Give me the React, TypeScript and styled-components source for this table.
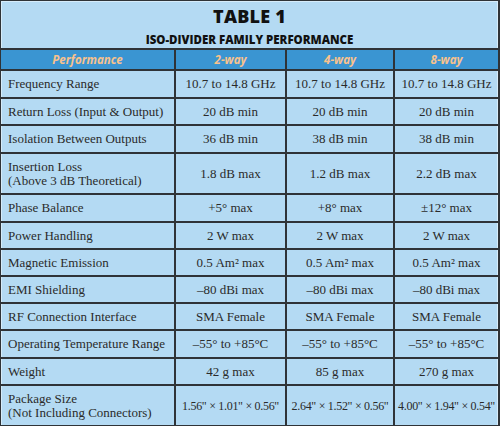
import React from 'react';
import styled, { createGlobalStyle } from 'styled-components';

const GlobalStyle = createGlobalStyle`
  body {
    margin: 0;
    background: #ffffff;
  }
`;

const Frame = styled.div`
  width: 500px;
  height: 426px;
  box-sizing: border-box;
  border: 1px solid #2f3337;
  border-right-width: 2px;
  background: #b4daf3;
  box-shadow: inset 1px 1px 0 #d6ecfa, inset -1px 0 0 #d6ecfa;
  overflow: hidden;
`;

const Heading = styled.div`
  height: 47px;
  display: flex;
  flex-direction: column;
  align-items: center;
  font-family: 'Open Sans', 'Liberation Sans', sans-serif;
  font-weight: 800;
  color: #111;
`;

const Title = styled.div`
  font-size: 18px;
  line-height: 18px;
  margin-top: 6px;
  letter-spacing: 0.2px;
`;

const Subtitle = styled.div`
  font-size: 11.5px;
  line-height: 12px;
  margin-top: 9px;
`;

const Table = styled.table`
  width: 100%;
  border-collapse: collapse;
  table-layout: fixed;
  font-family: 'Liberation Serif', 'DejaVu Serif', serif;
  font-size: 13px;
  color: #2a2a2a;
`;

const Row = styled.tr<{ $h: number }>`
  height: ${(p) => p.$h}px;
`;

const Head = styled.th`
  background: #3a95d2;
  color: #f9c28d;
  font-family: 'Open Sans', 'Liberation Sans', sans-serif;
  font-style: italic;
  font-weight: 700;
  font-size: 11.5px;
  text-align: center;
  border: 2px solid #2f3337;
  padding: 0;
  &:first-child { border-left: none; }
  &:last-child { border-right: none; }
`;

const Cell = styled.td<{ $label?: boolean }>`
  border: 2px solid #2f3337;
  padding: 0 ${(p) => (p.$label ? '7px' : '0')};
  text-align: ${(p) => (p.$label ? 'left' : 'center')};
  line-height: 14px;
  white-space: nowrap;
  &:first-child { border-left: none; }
  &:last-child { border-right: none; }
  tr:last-child & { border-bottom: none; }
`;

type Spec = { label: string[]; values: string[]; h: number };

const rows: Spec[] = [
  { label: ['Frequency Range'], values: ['10.7 to 14.8 GHz', '10.7 to 14.8 GHz', '10.7 to 14.8 GHz'], h: 28 },
  { label: ['Return Loss (Input & Output)'], values: ['20 dB min', '20 dB min', '20 dB min'], h: 27 },
  { label: ['Isolation Between Outputs'], values: ['36 dB min', '38 dB min', '38 dB min'], h: 28 },
  { label: ['Insertion Loss', '(Above 3 dB Theoretical)'], values: ['1.8 dB max', '1.2 dB max', '2.2 dB max'], h: 41 },
  { label: ['Phase Balance'], values: ['+5° max', '+8° max', '±12° max'], h: 28 },
  { label: ['Power Handling'], values: ['2 W max', '2 W max', '2 W max'], h: 27 },
  { label: ['Magnetic Emission'], values: ['0.5 Am² max', '0.5 Am² max', '0.5 Am² max'], h: 27 },
  { label: ['EMI Shielding'], values: ['–80 dBi max', '–80 dBi max', '–80 dBi max'], h: 27 },
  { label: ['RF Connection Interface'], values: ['SMA Female', 'SMA Female', 'SMA Female'], h: 27 },
  { label: ['Operating Temperature Range'], values: ['–55° to +85°C', '–55° to +85°C', '–55° to +85°C'], h: 28 },
  { label: ['Weight'], values: ['42 g max', '85 g max', '270 g max'], h: 27 },
  {
    label: ['Package Size', '(Not Including Connectors)'],
    values: ['1.56" × 1.01" × 0.56"', '2.64" × 1.52" × 0.56"', '4.00" × 1.94" × 0.54"'],
    h: 40,
  },
];

const Dims = styled.span`
  font-size: 12px;
  letter-spacing: -0.3px;
`;

const App = () => {
  return (
    <>
      <GlobalStyle />
      <Frame>
        <Heading>
          <Title>TABLE 1</Title>
          <Subtitle>ISO-DIVIDER FAMILY PERFORMANCE</Subtitle>
        </Heading>
        <Table>
          <colgroup>
            <col style={{ width: 174 }} />
            <col style={{ width: 111 }} />
            <col style={{ width: 108 }} />
            <col />
          </colgroup>
          <thead>
            <Row $h={21}>
              <Head>Performance</Head>
              <Head>2-way</Head>
              <Head>4-way</Head>
              <Head>8-way</Head>
            </Row>
          </thead>
          <tbody>
            {rows.map((r, i) => (
              <Row key={i} $h={r.h}>
                <Cell $label>
                  {r.label.map((l, j) => (
                    <div key={j}>{l}</div>
                  ))}
                </Cell>
                {r.values.map((v, j) => (
                  <Cell key={j}>{v.includes('×') ? <Dims>{v}</Dims> : v}</Cell>
                ))}
              </Row>
            ))}
          </tbody>
        </Table>
      </Frame>
    </>
  );
};

export default App;
